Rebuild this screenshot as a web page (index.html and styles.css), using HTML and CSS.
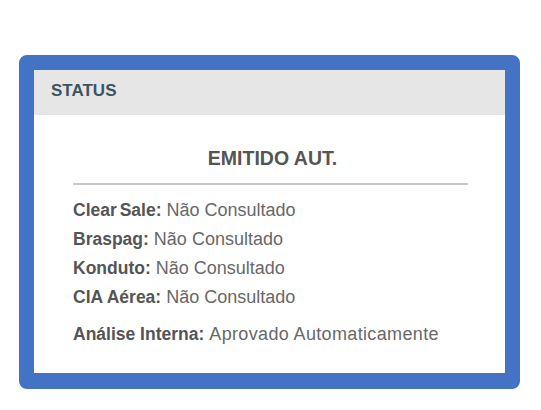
FILE: index.html
```html
<!DOCTYPE html>
<html lang="pt">
<head>
<meta charset="utf-8">
<link rel="stylesheet" href="styles.css">
</head>
<body>
<div class="card">
  <div class="card-header">STATUS</div>
  <div class="card-body">
    <div class="status-title">EMITIDO AUT.</div>
    <div class="divider"></div>
    <ul class="checks">
      <li><b class="tight">Clear Sale:</b> Não Consultado</li>
      <li><b>Braspag:</b> Não Consultado</li>
      <li><b>Konduto:</b> Não Consultado</li>
      <li><b>CIA Aérea:</b> Não Consultado</li>
      <li class="internal"><b>Análise Interna:</b> <span class="wide">Aprovado Automaticamente</span></li>
    </ul>
  </div>
</div>
</body>
</html>
```

FILE: styles.css
```css
html, body {
  margin: 0;
  padding: 0;
  background: #ffffff;
}
body {
  font-family: "Liberation Sans", Arial, sans-serif;
  padding: 55px 0 0 19px;
}
.card {
  box-sizing: border-box;
  width: 501px;
  height: 334px;
  border: 15px solid #4472c4;
  border-bottom-width: 16px;
  border-radius: 8px;
  background: #ffffff;
  display: flex;
  flex-direction: column;
}
.card-header {
  height: 45px;
  box-sizing: border-box;
  background: #e6e6e6;
  color: #3b5560;
  font-weight: bold;
  font-size: 17px;
  padding: 0 0 4px 17px;
  display: flex;
  align-items: center;
}
.card-body {
  padding: 31px 37px 0 39px;
}
.status-title {
  text-align: center;
  font-weight: bold;
  font-size: 19.5px;
  line-height: 24px;
  color: #555555;
  padding-left: 4px;
}
.divider {
  height: 2px;
  background: #c8c8c8;
  margin-top: 13px;
}
.checks {
  list-style: none;
  margin: 11px 0 0 0;
  padding: 0;
  font-size: 18px;
  line-height: 29px;
  color: #686868;
}
.checks b {
  color: #555555;
  font-size: 17.5px;
}
.checks .tight {
  word-spacing: -2px;
}
.checks .internal {
  margin-top: 8px;
}
.checks .wide {
  letter-spacing: 0.35px;
}
```
